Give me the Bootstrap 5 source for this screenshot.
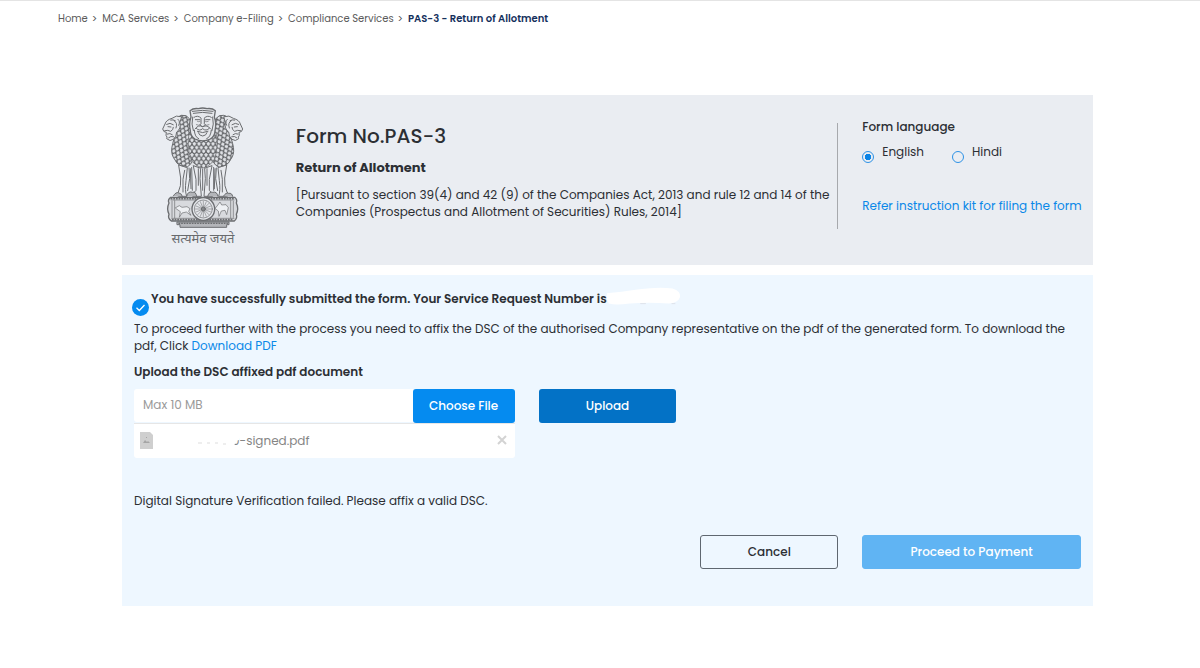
<!DOCTYPE html>
<html lang="en">
<head>
<meta charset="utf-8">
<meta name="viewport" content="width=device-width, initial-scale=1">
<title>PAS-3 - Return of Allotment</title>
<link href="https://cdn.jsdelivr.net/npm/bootstrap@5.3.0/dist/css/bootstrap.min.css" rel="stylesheet">
<style>
  body { font-family: Poppins, Inter, "Noto Sans", sans-serif; font-size: 12px; line-height: 17px; color: #2c2f34; border-top: 1px solid #e4e4e4; }
  a { color: #0a88e8; text-decoration: none; }
  .crumbs { padding-left: 58px; padding-top: 9px; --bs-breadcrumb-divider: ">"; --bs-breadcrumb-item-padding-x: 5px; --bs-breadcrumb-divider-color: #555; --bs-breadcrumb-font-size: 10px; }
  .crumbs .breadcrumb-item + .breadcrumb-item { padding-left: 4px; }
  .crumbs a { color: #5b5b5b; }
  .crumbs .active { color: #14305c; font-weight: 600; }
  .crumbs .active::before { font-weight: 400; }
  .page-body { margin: 68px 107px 0 122px; }
  .form-head { background: #eaedf2; min-height: 170px; }
  .emblem { padding-top: 11px; }
  .motto { font-family: "Noto Sans Devanagari", "Noto Sans", sans-serif; font-size: 13px; line-height: 19px; color: #686a6d; }
  .divided { border-right: 1px solid #a7a9ad; margin-top: 28px; height: 106px; }
  .divided h1 { font-size: 20px; line-height: 26px; font-weight: 500; margin-bottom: 10px; }
  .divided h2 { font-size: 13px; line-height: 17px; font-weight: 700; margin-bottom: 10px; }
  .lang { padding-top: 23px; }
  .lang .form-check-input { width: 12px; height: 12px; margin: 8px 8px 0 0; background-color: transparent; border-color: #2d92e6; flex: none; }
  .lang .form-check-input:checked { background-image: radial-gradient(circle, #0b84e6 0 3px, transparent 3px); }
  .lang .choices { gap: 28px; padding-top: 8px; margin-bottom: 34px; }
  .result { background: #eef7ff; margin-top: 10px; min-height: 331px; padding-top: 15px; }
  .tick { width: 17px; height: 17px; margin: 9px 2px 0 -2px; flex: none; }
  .blob { width: 76px; height: 20px; margin: -12px 0 -4px -1px; }
  .strong-line { font-weight: 600; }
  .doc-label { margin-top: 9px; }
  .upload-row { margin-top: 9px; }
  .file-box { height: 33px; border: 0; border-radius: 3px 0 0 3px; font-size: 12px; padding: 0 9px 2px; background: #fff; color: #777; }
  .file-box::placeholder { color: #9a9a9a; opacity: 1; }
  .act { height: 34px; border-radius: 3px; font-size: 12px; line-height: 17px; font-weight: 500; padding: 0 0 2px; --bs-btn-border-width: 1px; }
  .choose { width: 102px; background: #058bf0; color: #fff; flex: none; }
  .send { background: #0372c6; color: #fff; }
  .cancel { border: 1px solid #5f6770; color: #2c2f34; }
  .pay:disabled { background: #60b4f3; color: #fff; border-color: #60b4f3; opacity: 1; }
  .picked { background: #fff; height: 35px; border-top: 1px solid #e6e6e6; border-radius: 0 0 3px 3px; padding: 0 8px 2px 6px; color: #858585; }
  .picked .fname { margin-left: 79px; }
  .fname svg { position: absolute; left: -34px; top: 1px; width: 41px; height: 13px; }
  .message { margin-top: 34px; }
  .final { margin-top: 26px; }
</style>
</head>
<body>
<nav aria-label="breadcrumb">
  <ol class="breadcrumb crumbs mb-0">
    <li class="breadcrumb-item"><a href="#">Home</a></li>
    <li class="breadcrumb-item"><a href="#">MCA Services</a></li>
    <li class="breadcrumb-item"><a href="#">Company e-Filing</a></li>
    <li class="breadcrumb-item"><a href="#">Compliance Services</a></li>
    <li class="breadcrumb-item active" aria-current="page">PAS-3 - Return of Allotment</li>
  </ol>
</nav>

<main class="page-body">
  <header class="form-head row mx-0">
    <div class="col-2 emblem text-center">
      <svg width="82" height="124" viewBox="36 32 246 372" fill="none" stroke="#6b6d70" stroke-width="3" stroke-linecap="round" stroke-linejoin="round" aria-label="State emblem" role="img">
        <defs>
          <pattern id="locks" width="14" height="22" patternUnits="userSpaceOnUse">
            <path d="M7 0Q6 9 0 11M7 0Q8 9 14 11M0 11Q-1 20 -7 22M0 11Q1 20 7 22M14 11Q13 20 7 22M7 3V7M0 14V18M14 14V18" stroke="#626467" stroke-width="3" fill="none"/>
          </pattern>
          <pattern id="locksLeft" href="#locks" patternTransform="rotate(24)"/>
          <pattern id="locksRight" href="#locks" patternTransform="rotate(-24)"/>
        </defs>
        <!-- solid ground under the manes -->
        <path fill="#e0e2e6" stroke="none" d="M82 68Q104 54 124 74H192Q212 54 234 68L248 140Q252 172 236 206Q216 222 200 208Q158 230 116 208Q100 222 80 206Q62 172 68 140Z"/>
        <!-- side manes -->
        <path fill="url(#locksLeft)" d="M82 66Q94 56 108 61Q120 68 126 84L130 130L126 200Q114 220 98 215Q78 206 70 186Q61 170 68 145L74 124Z"/>
        <path fill="url(#locksRight)" d="M234 66Q222 56 208 61Q196 68 190 84L186 130L190 200Q202 220 218 215Q238 206 246 186Q255 170 248 145L242 124Z"/>
        <!-- side faces -->
        <path fill="#e6e8ec" d="M94 64Q78 58 66 69Q48 74 45 86L38 101Q40 111 49 111L48 120Q53 126 50 130Q60 140 70 132Q80 124 80 110Q94 100 90 82Z"/>
        <path d="M50 87Q60 80 70 88M54 94L63 95M44 106Q54 103 62 108Q70 104 70 96M52 116Q60 112 67 118M56 127Q62 121 71 124M72 76Q84 82 78 98M62 74Q70 72 76 76M84 72Q92 78 86 90"/>
        <path fill="#e6e8ec" d="M222 64Q238 58 250 69Q268 74 271 86L278 101Q276 111 267 111L268 120Q263 126 266 130Q256 140 246 132Q236 124 236 110Q222 100 226 82Z"/>
        <path d="M266 87Q256 80 246 88M262 94L253 95M272 106Q262 103 254 108Q246 104 246 96M264 116Q256 112 249 118M260 127Q254 121 245 124M244 76Q232 82 238 98M254 74Q246 72 240 76M232 72Q224 78 230 90"/>
        <!-- centre mane and head -->
        <path fill="#e0e2e6" stroke="none" d="M118 112Q108 150 124 196Q158 234 192 196Q208 150 198 112Z"/>
        <path fill="url(#locks)" stroke-width="2" d="M118 112Q108 150 124 196Q140 214 158 219Q176 214 192 196Q208 150 198 112Z"/>
        <path fill="#e6e8ec" stroke-width="4" d="M120 46Q130 38 145 40Q158 36 171 40Q187 38 196 46L193 65Q200 85 195 106Q195 122 181 131Q158 142 135 131Q121 122 121 106Q116 85 123 65Z"/>
        <path d="M127 48Q157 42 189 48M130 54Q158 48 186 54M128 65Q123 87 130 106M188 65Q193 87 186 106M132 66Q143 58 153 68M163 68Q173 58 184 66M136 73H149M167 73H180M153 70V85Q146 90 158 94Q170 90 163 85V70M136 100Q145 87 158 94Q172 87 181 100M139 99Q148 109 158 100Q168 109 178 99M142 108Q158 116 174 108M145 112Q147 121 158 122Q169 121 171 112M133 104Q134 126 146 130M184 104Q182 126 170 130"/>
        <path d="M139 88Q147 92 151 88M177 88Q169 92 165 88M142 78Q147 81 150 78M166 78Q170 81 175 78" stroke-width="2"/>
        <!-- legs -->
        <path fill="#e8eaee" d="M86 210L92 248Q94 273 85 290Q76 300 86 303H110Q104 286 108 256L112 218ZM230 210L224 248Q222 273 231 290Q240 300 230 303H206Q212 286 208 256L204 218ZM130 212L138 252V285Q126 295 128 303H154L150 250L152 220ZM186 212L178 252V285Q190 295 188 303H162L166 250L164 220Z"/>
        <path d="M117 218L119 250L113 286M125 216L127 285M104 225L99 252V290M199 218L197 250L203 286M191 216V285M213 225L217 252V290M145 220V270M171 220V270M158 222V285M121 220L123 280M195 220L193 280"/>
        <path fill="#b3b5b9" d="M70 302Q78 288 87 293Q95 294 97 303M110 303Q113 286 128 291Q137 287 140 303M173 303Q178 287 188 291Q201 287 204 303M220 303Q228 290 236 294Q246 292 248 303"/>
        <!-- abacus -->
        <path fill="#d8dade" stroke-width="4" d="M62 306H254Q263 313 259 323Q267 340 259 357Q263 369 253 377H64Q52 369 57 357Q49 340 57 323Q52 313 62 306Z"/>
        <path stroke-width="2" d="M63 314H252M65 369H252M74 316V368M242 316V368M66 318V366M250 318V366"/>
        <path stroke-width="5" stroke-dasharray="1 7" d="M64 310H252M68 373H250"/>
        <path fill="#eef0f3" stroke-width="2" d="M77 337L88 331L96 336L111 334L120 340L116 348L123 360L109 350L96 353L88 366L91 349L81 342ZM202 331L210 320L215 329L228 328L235 337L230 358L225 345L214 347L207 363L205 347L196 340Z"/>
        <circle cx="160" cy="341" r="34" fill="#e4e6ea" stroke-width="4"/>
        <circle cx="160" cy="341" r="27" stroke-width="2"/>
        <path stroke="#85878a" stroke-width="2" d="M160 317V365M136 341H184M143 324L177 358M177 324L143 358M151 319L169 363M169 319L151 363M138 332L182 350M182 332L138 350"/>
        <circle cx="160" cy="341" r="6" fill="#85878a"/>
        <path fill="#b3b5b9" d="M82 380H237V388H230V396H90V388H82Z"/>
        <path stroke-dasharray="2 6" stroke-width="4" d="M87 384H232"/>
      </svg>
      <div class="motto" lang="hi">सत्यमेव जयते</div>
    </div>
    <div class="col-7">
      <div class="divided">
        <h1>Form No.PAS-3</h1>
        <h2>Return of Allotment</h2>
        <p class="mb-0">[Pursuant to section 39(4) and 42 (9) of the Companies Act, 2013 and rule 12 and 14 of the Companies (Prospectus and Allotment of Securities) Rules, 2014]</p>
      </div>
    </div>
    <div class="col-3 lang">
      <div class="fw-medium">Form language</div>
      <div class="d-flex choices" role="radiogroup" aria-label="Form language">
        <div class="d-flex"><input class="form-check-input" type="radio" name="lang" id="en" checked><label for="en">English</label></div>
        <div class="d-flex"><input class="form-check-input" type="radio" name="lang" id="hi"><label for="hi">Hindi</label></div>
      </div>
      <a class="text-nowrap" href="#">Refer instruction kit for filing the form</a>
    </div>
  </header>

  <section class="result">
    <div class="mx-0 row">
      <div class="col-12">
        <div class="d-flex">
          <svg class="tick" viewBox="0 0 17 17" aria-hidden="true"><circle cx="8.500" cy="8.500" r="8.500" fill="#058bf0"/><path d="M4.500 8.800L7.300 11.500L12.500 6" fill="none" stroke="#fff" stroke-width="1.300"/></svg>
          <div class="strong-line">You have successfully submitted the form. Your Service Request Number is<svg class="blob" viewBox="0 0 80 20" aria-hidden="true"><path fill="#fff" d="M1 7Q15 6 35 3Q55 0 70 2Q79 5 78 11Q76 17 66 18Q45 16 25 18Q10 20 3 18Q0 13 1 7Z"/><path d="M36 18H42M69 18H73" stroke="#dde3ea"/></svg></div>
        </div>
        <p class="mb-0 mt-1">To proceed further with the process you need to affix the DSC of the authorised Company representative on the pdf of the generated form. To download the pdf, Click <a href="#">Download PDF</a></p>
        <label class="strong-line doc-label d-block" for="doc">Upload the DSC affixed pdf document</label>
      </div>
    </div>
    <div class="row mx-0 upload-row">
      <div class="col-5">
        <div class="d-flex">
          <input id="doc" class="form-control file-box" type="text" placeholder="Max 10 MB" readonly>
          <button class="btn act choose" type="button">Choose File</button>
        </div>
        <div class="picked d-flex align-items-center">
          <svg width="13" height="17" viewBox="0 0 13 17" aria-hidden="true"><path fill="#cfcfcf" d="M0 0H10L13 3V17H0Z"/><path fill="#a5a5a5" d="M3 11L5 8L7 10L8 9L10 11ZM6 5H7V6H6Z"/></svg>
          <span class="fname position-relative">0-signed.pdf<svg viewBox="0 0 41 13" aria-hidden="true"><path fill="#fff" d="M0 0H41V7L38 8L36 13H0Z"/><path d="M0 10H4M9 10H12M17 10H20M25 11H28" stroke="#ddd"/></svg></span>
          <button class="btn p-0 border-0 ms-auto d-flex" type="button" aria-label="Remove file"><svg width="10" height="10" viewBox="0 0 10 10" stroke="#d3d3d3" stroke-width="2"><path d="M1 1L9 9M9 1L1 9"/></svg></button>
        </div>
      </div>
      <div class="col-2"><button class="btn act send w-100" type="button">Upload</button></div>
    </div>
    <div class="row mx-0 message"><p class="col-12 mb-0" role="alert">Digital Signature Verification failed. Please affix a valid DSC.</p></div>
    <div class="row mx-0 final">
      <div class="col-2 offset-7"><button class="btn act cancel w-100" type="button">Cancel</button></div>
      <div class="col-3"><button class="btn act pay w-100" type="button" disabled>Proceed to Payment</button></div>
    </div>
  </section>
</main>
<script src="https://cdn.jsdelivr.net/npm/bootstrap@5.3.0/dist/js/bootstrap.bundle.min.js"></script>
</body>
</html>
